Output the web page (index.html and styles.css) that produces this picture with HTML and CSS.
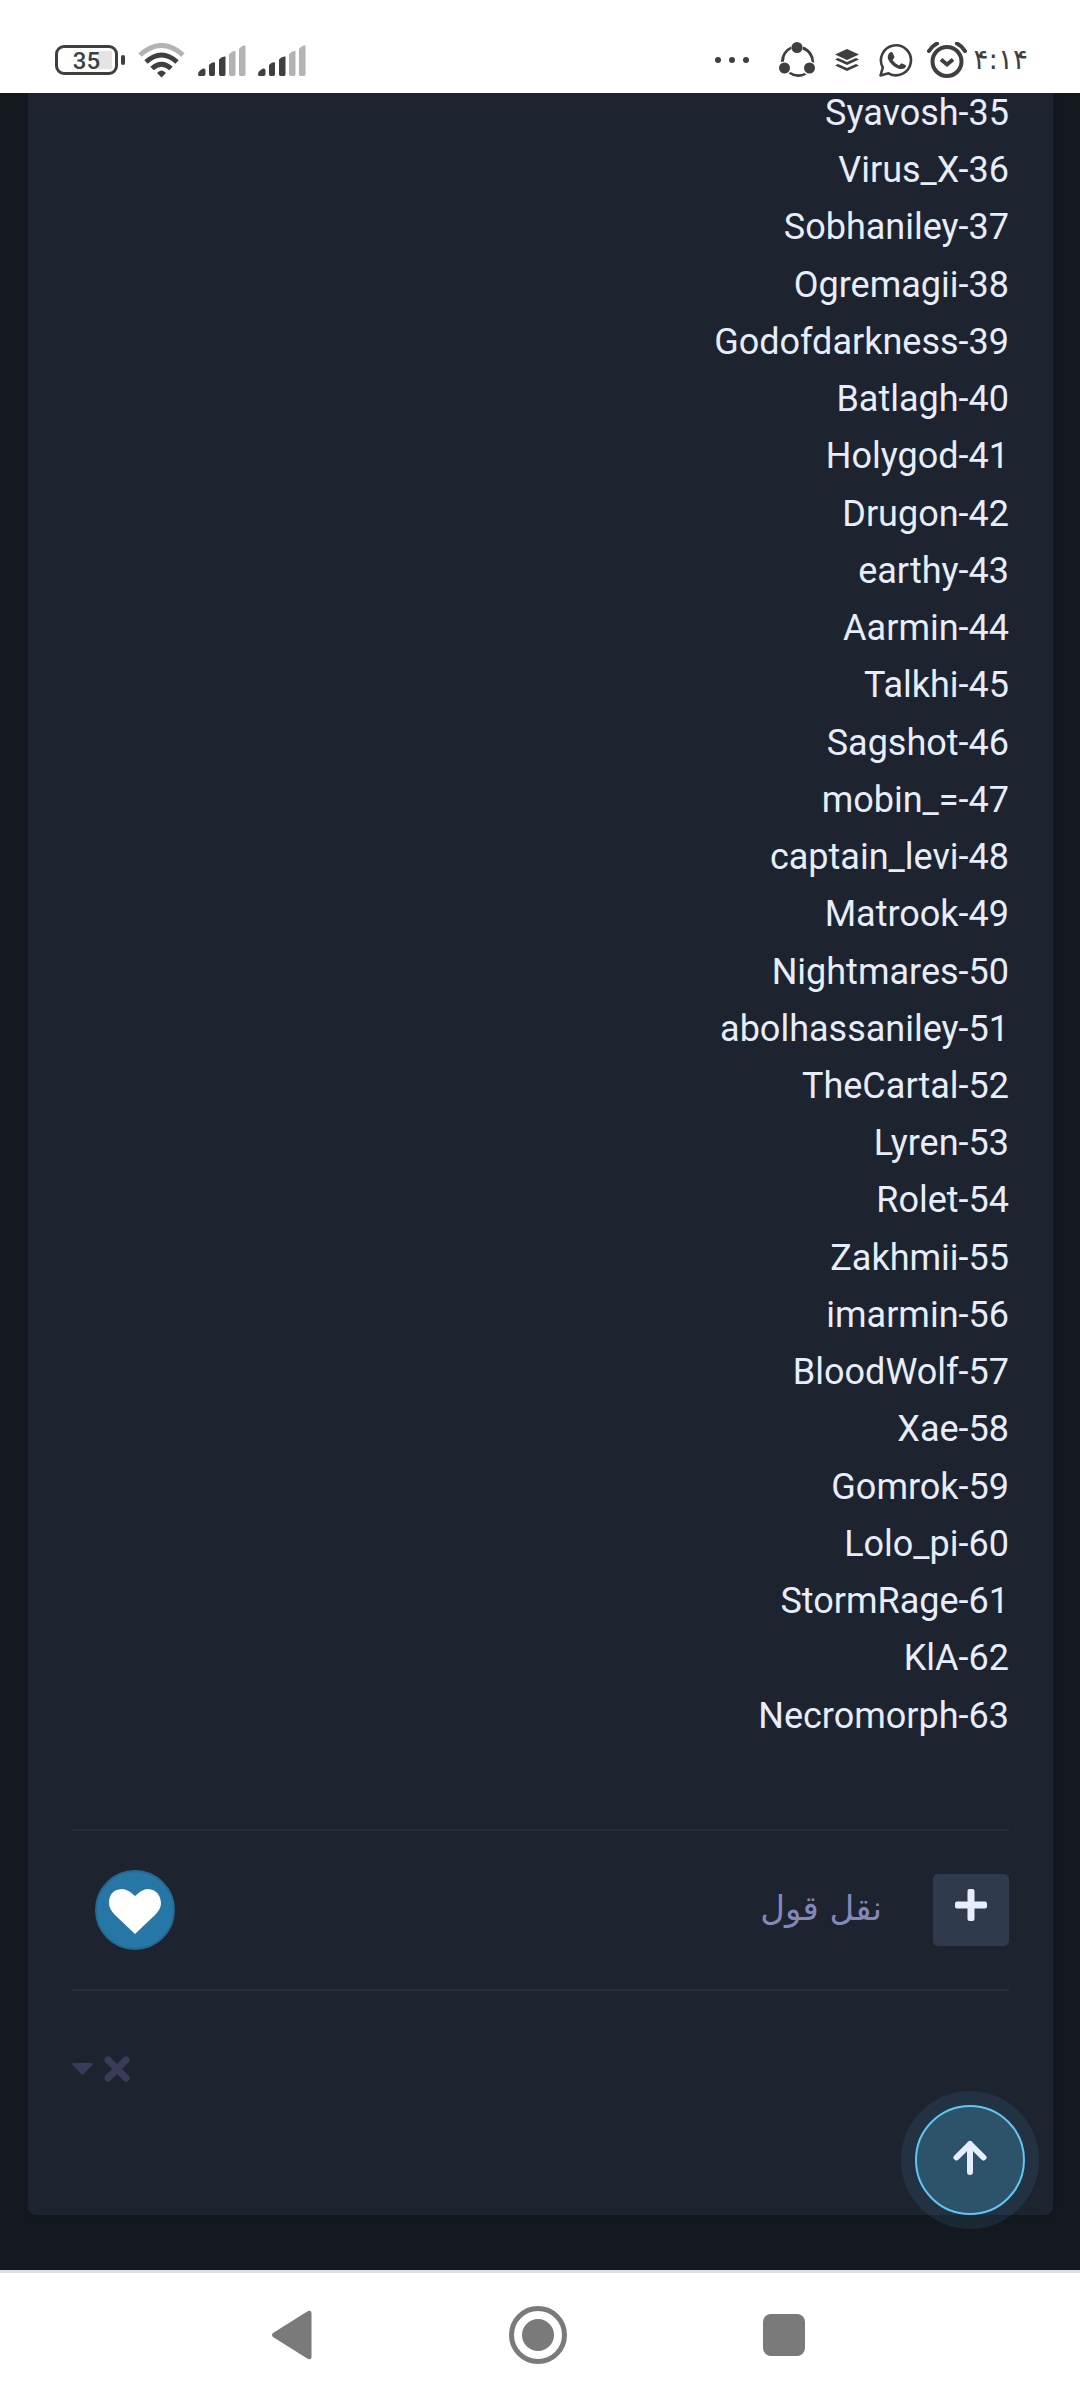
FILE: index.html
```
<!DOCTYPE html>
<html lang="fa" dir="rtl">

<head>
    <meta charset="UTF-8">
    <meta name="viewport" content="width=device-width, initial-scale=1.0">
    <title>نقل قول</title>
    <link rel="stylesheet" href="styles.css">
</head>

<body>
    <header class="status" dir="ltr">
        <div class="status-left">
            <div class="battery"><span class="level">35</span></div>
            <svg width="47" height="35" viewBox="0 0 47 35" fill="none" stroke="#3f3f3f" stroke-width="5">
                <path d="M2 12Q23.500-7 45 12" stroke="#b3b3b3" />
                <path d="M8 19Q23.500 5 39 19" />
                <path d="M14 25.500Q23.500 17 33 25.500" />
                <path d="M19 30Q23.500 25 28 30L23.500 34.500Z" fill="#3f3f3f" stroke="none" />
            </svg>
            <svg class="signal" width="48" height="31" viewBox="0 0 48 31">
                <path d="M0 29.500Q0 27 2 25.500L5 23.500Q7.500 23 7.500 25.500V29Q7.500 31 5.500 31H1.500Q0 31 0 29.500ZM11 20Q14 16.500 17 17.500V29Q17 31 15.500 31H12.500Q11 31 11 29ZM21 14.500Q24 11 27.500 11.500V29Q27.500 31 26 31H22.500Q21 31 21 29Z" fill="#3f3f3f" />
                <path d="M31 9.500Q34 5.500 37.500 6V29Q37.500 31 36 31H32.500Q31 31 31 29ZM41 4Q44 0 47.500 .5V29Q47.500 31 46 31H42.500Q41 31 41 29Z" fill="#b3b3b3" />
            </svg>
            <svg class="signal" width="48" height="31" viewBox="0 0 48 31">
                <path d="M0 29.500Q0 27 2 25.500L5 23.500Q7.500 23 7.500 25.500V29Q7.500 31 5.500 31H1.500Q0 31 0 29.500ZM11 20Q14 16.500 17 17.500V29Q17 31 15.500 31H12.500Q11 31 11 29ZM21 14.500Q24 11 27.500 11.500V29Q27.500 31 26 31H22.500Q21 31 21 29Z" fill="#3f3f3f" />
                <path d="M31 9.500Q34 5.500 37.500 6V29Q37.500 31 36 31H32.500Q31 31 31 29ZM41 4Q44 0 47.500 .5V29Q47.500 31 46 31H42.500Q41 31 41 29Z" fill="#b3b3b3" />
            </svg>
        </div>
        <div class="status-right">
            <svg class="dots" width="36" height="6" viewBox="0 0 36 6" fill="#3f3f3f">
                <circle cx="3" cy="3" r="3" />
                <circle cx="17" cy="3" r="3" />
                <circle cx="31" cy="3" r="3" />
            </svg>
            <svg width="36" height="36" viewBox="0 0 36 36">
                <g fill="#3f3f3f">
                    <circle cx="18" cy="5.500" r="5.500" />
                    <circle cx="5.500" cy="26" r="5.500" />
                    <circle cx="30.500" cy="26" r="5.500" />
                    <path d="M12 4.500A16 16 0 0 0 2 20L5 19.500A14 14 0 0 1 12.500 7ZM24 4.500A16 16 0 0 1 35 21L32.500 19.500A15 15 0 0 0 23.500 7.500ZM9.500 31.500Q18 38 27.500 32.500L25.500 31Q18 34 11.500 30Z" />
                </g>
            </svg>
            <svg width="24" height="24" viewBox="0 0 24 24" fill="#3f3f3f">
                <path d="M12 1L24 6.500L12 12L0 6.500Z" />
                <path d="M0 11.500L3 10L12 14L21 10L24 11.500L12 17Z" />
                <path d="M0 17.500L3 16L12 20L21 16L24 17.500L12 23Z" />
            </svg>
            <svg width="34" height="34" viewBox="0 0 34 34">
                <path d="M1.500 32.500L3.800 24.500A15 15 0 1 1 9.500 30.300Z" fill="none" stroke="#3f3f3f" stroke-width="2.600" stroke-linejoin="round" />
                <path d="M10.500 10Q12 8.500 13.500 9.500L15.500 14Q15.500 15 13.500 17Q16 21 20 22.500L22.500 20.200L26.500 22Q27.500 22.500 26.500 24.500Q23.500 27 19 25.500Q12 22.500 9 16Q8 12.500 10.500 10Z" fill="#3f3f3f" />
            </svg>
            <svg class="alarm" width="40" height="36" viewBox="0 0 40 36" fill="none" stroke="#3f3f3f">
                <circle cx="20" cy="19.500" r="14.500" stroke-width="4" />
                <path d="M14 17.500L20 22.500L26 17.500" stroke-width="4" />
                <path d="M2 9Q5 4 10 1.500M38 9Q35 4 30 1.500" stroke-width="4" stroke-linecap="round" />
            </svg>
            <span class="time" dir="rtl">۴:۱۴</span>
        </div>
    </header>

    <main class="page">
        <article class="post">
            <div class="names" dir="ltr">
                <div>Syavosh-35</div>
                <div>Virus_X-36</div>
                <div>Sobhaniley-37</div>
                <div>Ogremagii-38</div>
                <div>Godofdarkness-39</div>
                <div>Batlagh-40</div>
                <div>Holygod-41</div>
                <div>Drugon-42</div>
                <div>earthy-43</div>
                <div>Aarmin-44</div>
                <div>Talkhi-45</div>
                <div>Sagshot-46</div>
                <div>mobin_=-47</div>
                <div>captain_levi-48</div>
                <div>Matrook-49</div>
                <div>Nightmares-50</div>
                <div>abolhassaniley-51</div>
                <div>TheCartal-52</div>
                <div>Lyren-53</div>
                <div>Rolet-54</div>
                <div>Zakhmii-55</div>
                <div>imarmin-56</div>
                <div>BloodWolf-57</div>
                <div>Xae-58</div>
                <div>Gomrok-59</div>
                <div>Lolo_pi-60</div>
                <div>StormRage-61</div>
                <div>KlA-62</div>
                <div>Necromorph-63</div>
            </div>

            <div class="actions">
                <button class="add" type="button" aria-label="+">
                    <svg width="32" height="32" viewBox="0 0 32 32" fill="#e6edfc">
                        <rect x="12.500" width="7" height="32" rx="2" />
                        <rect y="12.500" width="32" height="7" rx="2" />
                    </svg>
                </button>
                <a class="quote" href="#">نقل قول</a>
                <button class="like" type="button" aria-label="like">
                    <svg width="52" height="45" viewBox="0 0 52 45">
                        <path d="M26 7L23 4.500Q18 0 12.500 0Q0 1 0 14Q0 20 6 26L26 45L46 26Q52 20 52 14Q51 1 39 0Q34 0 29 4.500Z" fill="#fff" />
                    </svg>
                </button>
            </div>

            <div class="tools">
                <button class="tool" type="button" aria-label="close">
                    <svg width="26" height="26" viewBox="0 0 26 26">
                        <path d="M4 4L22 22M22 4L4 22" stroke="#3a3b58" stroke-width="7" stroke-linecap="round" />
                    </svg>
                </button>
                <button class="tool" type="button" aria-label="menu">
                    <svg width="21" height="12" viewBox="0 0 21 12">
                        <path d="M1.500 0H19.500Q22 .5 20 2.500L11.500 11.200Q10.500 12 9.500 11.200L1 2.500Q-1 .5 1.500 0Z" fill="#3a3b58" />
                    </svg>
                </button>
            </div>
        </article>

        <button class="to-top" type="button" aria-label="top">
            <svg width="34" height="35" viewBox="0 0 34 35">
                <path d="M17 4V32M3.500 17.500L17 4L30.500 17.500" fill="none" stroke="#e6edfc" stroke-width="6" stroke-linecap="round" stroke-linejoin="round" />
            </svg>
        </button>
    </main>

    <nav class="navbar" dir="ltr">
        <button type="button" aria-label="back">
            <svg width="40" height="50" viewBox="0 0 40 50">
                <path d="M1 23L36 1Q39.500 0 39.500 3V47Q39.500 50 36 49L1 27Q-1 25 1 23Z" fill="#7a7a7a" />
            </svg>
        </button>
        <button type="button" aria-label="home">
            <svg width="58" height="58" viewBox="0 0 58 58">
                <circle cx="29" cy="29" r="26.500" fill="none" stroke="#7a7a7a" stroke-width="5" />
                <circle cx="29" cy="29" r="16" fill="#7a7a7a" />
            </svg>
        </button>
        <button type="button" aria-label="recent">
            <svg width="42" height="42" viewBox="0 0 42 42">
                <rect width="42" height="42" rx="8" fill="#7a7a7a" />
            </svg>
        </button>
    </nav>
</body>

</html>
```
FILE: styles.css
```
body {
    display: flex;
    flex-direction: column;
    min-height: 100vh;
    margin: 0;
    background: #141920;
    font-family: Roboto, "DejaVu Sans", sans-serif;
}

button {
    display: flex;
    align-items: center;
    justify-content: center;
    box-sizing: border-box;
    margin: 0;
    padding: 0;
    border: none;
    background: none;
    cursor: pointer;
}

svg {
    display: block;
    flex: none;
}

/* phone status bar */
.status {
    display: flex;
    justify-content: space-between;
    box-sizing: border-box;
    height: 93px;
    padding: 40px 52px 13px 55px;
    background: #fff;
    position: relative;
    z-index: 1;
}

.status-left, .status-right {
    display: flex;
    align-items: center;
}

.status-left {
    gap: 13px;
}

.status-right {
    gap: 20px;
}

.signal + .signal {
    margin-left: -1px;
}

.dots {
    margin-right: 8px;
}

.alarm {
    margin-left: -6px;
}

.battery {
    display: flex;
    align-items: center;
    gap: 3px;
}

.battery .level {
    box-sizing: border-box;
    width: 63px;
    height: 30px;
    border: 3px solid #3f3f3f;
    border-radius: 9px;
    background: linear-gradient(#e4e4e4, #e4e4e4) no-repeat 40px 3px / 14px 18px;
    color: #3f3f3f;
    font-size: 24px;
    font-weight: 500;
    line-height: 26px;
    text-align: center;
}

.battery::after {
    content: "";
    width: 4px;
    height: 10px;
    border-radius: 2px;
    background: #3f3f3f;
}

.time {
    margin-left: -14px;
    color: #3f3f3f;
    font-family: "DejaVu Sans", sans-serif;
    font-size: 28px;
    line-height: 40px;
}

/* post */
.page {
    position: relative;
    flex: 1;
    padding: 0 27px 55px 28px;
}

.post {
    padding: 0 44px 133px;
    border-radius: 0 0 8px 8px;
    background: #1e2330;
    box-shadow: 0 2px 6px rgba(0, 0, 0, 0.1);
}

/* first line is scrolled slightly under the status bar */
.names {
    margin-top: -8px;
    color: #e6edfc;
    font-size: 36px;
    line-height: 1.59;
    text-align: right;
}

.actions {
    display: flex;
    align-items: center;
    height: 158px;
    margin-top: 84px;
    border-top: 2px solid #262c3b;
    border-bottom: 2px solid #2a3040;
}

.add {
    width: 76px;
    height: 72px;
    padding-bottom: 10px;
    border-radius: 5px;
    background: #303a4d;
}

.quote {
    margin-right: 51px;
    padding-bottom: 4px;
    color: #8488b9;
    font-family: "DejaVu Sans", sans-serif;
    font-size: 34px;
    text-decoration: none;
}

.like {
    width: 80px;
    height: 80px;
    margin-right: auto;
    margin-left: 23px;
    padding-top: 4px;
    border: 2px solid #256a92;
    border-radius: 50%;
    background: #2677a6;
}

.tools {
    display: flex;
    justify-content: flex-end;
    align-items: center;
    gap: 11px;
    margin-top: 65px;
}

.to-top {
    position: absolute;
    right: 55px;
    bottom: 55px;
    width: 110px;
    height: 110px;
    padding-bottom: 6px;
    border: 2px solid #62c6f2;
    border-radius: 50%;
    background: #2d536a;
    box-shadow: 0 0 0 14px rgba(77, 168, 204, 0.12);
}

/* phone navigation bar */
.navbar {
    display: flex;
    align-items: center;
    justify-content: center;
    gap: 188px;
    height: 124px;
    padding: 0 5px 3px 0;
    border-top: 3px solid #e0e0e0;
    background: #fff;
}

.navbar button {
    width: 58px;
    height: 58px;
}
```
